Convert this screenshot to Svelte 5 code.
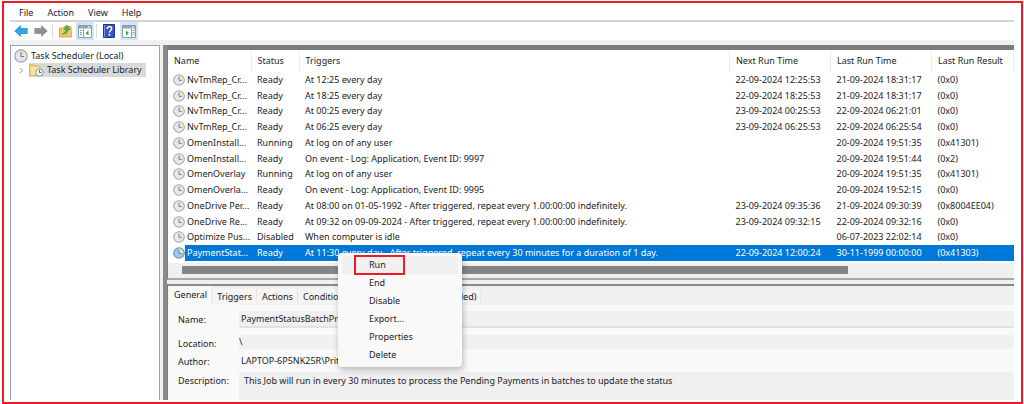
<script lang="ts">
	const menus = ['File', 'Action', 'View', 'Help'];

	const tasks = [
		{ name: 'NvTmRep_Cr...', status: 'Ready', trigger: 'At 12:25 every day', next: '22-09-2024 12:25:53', last: '21-09-2024 18:31:17', result: '(0x0)' },
		{ name: 'NvTmRep_Cr...', status: 'Ready', trigger: 'At 18:25 every day', next: '22-09-2024 18:25:53', last: '21-09-2024 18:31:17', result: '(0x0)' },
		{ name: 'NvTmRep_Cr...', status: 'Ready', trigger: 'At 00:25 every day', next: '23-09-2024 00:25:53', last: '22-09-2024 06:21:01', result: '(0x0)' },
		{ name: 'NvTmRep_Cr...', status: 'Ready', trigger: 'At 06:25 every day', next: '23-09-2024 06:25:53', last: '22-09-2024 06:25:54', result: '(0x0)' },
		{ name: 'OmenInstall...', status: 'Running', trigger: 'At log on of any user', next: '', last: '20-09-2024 19:51:35', result: '(0x41301)' },
		{ name: 'OmenInstall...', status: 'Ready', trigger: 'On event - Log: Application, Event ID: 9997', next: '', last: '20-09-2024 19:51:44', result: '(0x2)' },
		{ name: 'OmenOverlay', status: 'Running', trigger: 'At log on of any user', next: '', last: '20-09-2024 19:51:35', result: '(0x41301)' },
		{ name: 'OmenOverla...', status: 'Ready', trigger: 'On event - Log: Application, Event ID: 9995', next: '', last: '20-09-2024 19:52:15', result: '(0x0)' },
		{ name: 'OneDrive Per...', status: 'Ready', trigger: 'At 08:00 on 01-05-1992 - After triggered, repeat every 1.00:00:00 indefinitely.', next: '23-09-2024 09:35:36', last: '21-09-2024 09:30:39', result: '(0x8004EE04)' },
		{ name: 'OneDrive Re...', status: 'Ready', trigger: 'At 09:32 on 09-09-2024 - After triggered, repeat every 1.00:00:00 indefinitely.', next: '23-09-2024 09:32:15', last: '22-09-2024 09:32:16', result: '(0x0)' },
		{ name: 'Optimize Pus...', status: 'Disabled', trigger: 'When computer is idle', next: '', last: '06-07-2023 22:02:14', result: '(0x0)' },
		{ name: 'PaymentStat...', status: 'Ready', trigger: 'At 11:30 every day - After triggered, repeat every 30 minutes for a duration of 1 day.', next: '22-09-2024 12:00:24', last: '30-11-1999 00:00:00', result: '(0x41303)' },
	];

	const tabs = ['General', 'Triggers', 'Actions', 'Conditions', 'Settings', 'History (disabled)'];
	const commands = ['Run', 'End', 'Disable', 'Export...', 'Properties', 'Delete'];

	let selected = $state(11);
	let activeTab = $state('General');
</script>

{#snippet clock(size: number)}
	<svg width={size} height={size} viewBox="0 0 14 14" aria-hidden="true">
		<circle cx="7" cy="7" r="6.2" fill="#e4e8ed" stroke="#a3a3a3" stroke-width="1.2" />
		<path d="M7 7V2a5 5 0 0 1 5 5z" fill="#f3e9a8" />
		<path d="M7 3v4.500h3.200" fill="none" stroke="#6c80ae" stroke-width="1.1" />
	</svg>
{/snippet}

{#snippet paneIcon(arrow: string)}
	<svg width="14" height="13" viewBox="0 0 14 13" aria-hidden="true">
		<path d="M.5 .5h13v12H.5z" fill="#fff" stroke="#9299a3" />
		<path d="M1 1h12v2.500H1z" fill="#9ba3ae" />
		<path d="M10 2h2" stroke="#fff" />
		{#if arrow === 'left'}
			<path d="M5.500 4v8" stroke="#9299a3" />
			<path d="M2 5.500h2M2 7.500h2M2 9.500h2" stroke="#7aa0c8" />
			<path d="M10.500 5.500v5L7.500 8z" fill="#2fae3c" />
		{:else}
			<path d="M9.500 4v8" stroke="#9299a3" />
			<path d="M10.500 5.500h2M10.500 7.500h2M10.500 9.500h2" stroke="#7aa0c8" />
			<path d="M4 5.500v5L7 8z" fill="#2fae3c" />
		{/if}
	</svg>
{/snippet}

<div class="frame">
	<div class="console">
		<nav>
			{#each menus as menu}
				<button>{menu}</button>
			{/each}
		</nav>

		<div class="toolbar">
			<button aria-label="Back">
				<svg width="14" height="12" viewBox="0 0 14 12">
					<path d="M.8 6L6.500 .8V3.500h6.700v5H6.500v2.700z" fill="#34a6e4" stroke="#3b9bd6" />
				</svg>
			</button>
			<button aria-label="Forward">
				<svg width="14" height="12" viewBox="0 0 14 12">
					<path d="M13.200 6L7.500 .8V3.500H.8v5h6.700v2.700z" fill="#8f8f8f" stroke="#9a9a9a" />
				</svg>
			</button>
			<i></i>
			<button aria-label="Up one level">
				<svg width="13" height="14" viewBox="0 0 13 14">
					<path d="M.5 4h4l1-1.500h6.500l.5 10.500H.5z" fill="#efc96d" stroke="#d3ab55" />
					<path d="M3 10c3-.5 4-2.500 4-4.500H5L8 1l3 4.500H9C9 8.500 6.500 10.500 3 10z" fill="#43b649" stroke="#2a8f35" stroke-width=".5" />
				</svg>
			</button>
			<button class="on" aria-label="Show or hide console tree">{@render paneIcon('left')}</button>
			<i></i>
			<button aria-label="Help">
				<svg width="12" height="14" viewBox="0 0 12 14">
					<path d="M.5 .5h11v13H.5z" fill="#3656c4" stroke="#24398e" />
					<path d="M1.500 1v12" stroke="#7d95e6" />
					<path d="M4.300 5c0-3.200 4.400-3 4.400-.4C8.700 6.500 6.500 6.500 6.500 8.500" fill="none" stroke="#fff" stroke-width="1.500" />
					<circle cx="6.500" cy="10.800" r="1" fill="#fff" />
				</svg>
			</button>
			<button class="on" aria-label="Show or hide action pane">{@render paneIcon('right')}</button>
		</div>

		<div class="workspace">
			<aside>
				<a class="root" href="#local">{@render clock(14)}<span>Task Scheduler (Local)</span></a>
				<div class="branch">
					<svg width="5" height="7" viewBox="0 0 5 7" aria-hidden="true"><path d="M1 1l2.500 2.500L1 6" fill="none" stroke="#999" /></svg>
					<a href="#library">
						<svg width="15" height="14" viewBox="0 0 15 14" aria-hidden="true">
							<path d="M.5 1.500h4l1 1.500H11v9.500H.5z" fill="#f3cf77" stroke="#dab75e" />
							<path d="M2 4h8v8H2z" fill="#fbe3a2" />
							<circle cx="10.500" cy="9.500" r="3.800" fill="#eef2f6" stroke="#8a97a5" />
							<path d="M10.500 7v2.500h2" fill="none" stroke="#4b6894" />
						</svg>
						<span>Task Scheduler Library</span>
					</a>
				</div>
			</aside>

			<main>
				<section class="list">
					<table>
						<colgroup>
							<col class="c-name" /><col class="c-status" /><col /><col class="c-time" /><col class="c-time" /><col class="c-result" />
						</colgroup>
						<thead>
							<tr>
								<th>Name</th>
								<th>Status</th>
								<th>Triggers</th>
								<th>Next Run Time</th>
								<th>Last Run Time</th>
								<th>Last Run Result</th>
							</tr>
						</thead>
						<tbody>
							{#each tasks as task, i}
								<tr class:selected={selected === i} onclick={() => (selected = i)}>
									<td><div class="task">{@render clock(12)}<span>{task.name}</span></div></td>
									<td>{task.status}</td>
									<td>{task.trigger}</td>
									<td>{task.next}</td>
									<td>{task.last}</td>
									<td>{task.result}</td>
								</tr>
							{/each}
						</tbody>
					</table>
					<div class="scrollbar"><div class="thumb"></div></div>

					<div class="context" role="menu">
						{#each commands as command, i}
							<button role="menuitem" class:hover={i === 0}><span>{command}</span></button>
						{/each}
					</div>
				</section>

				<section class="details">
					<div class="tabs" role="tablist">
						{#each tabs as tab}
							<button role="tab" aria-selected={activeTab === tab} onclick={() => (activeTab = tab)}>{tab}</button>
						{/each}
					</div>
					<form>
						<label for="name">Name:</label>
						<input id="name" class="name" readonly value="PaymentStatusBatchProcess" />
						<label for="location">Location:</label>
						<input id="location" class="location" readonly value={'\\'} />
						<label for="author" class="middle">Author:</label>
						<input id="author" class="author middle" readonly value="LAPTOP-6P5NK25R\Pritam" />
						<label for="description">Description:</label>
						<textarea id="description" readonly value="This Job will run in every 30 minutes to process the Pending Payments in batches to update the status"></textarea>
					</form>
				</section>
			</main>
		</div>
	</div>
</div>

<style>
	:global(body) {
		background: #fff;
	}

	.frame {
		box-sizing: border-box;
		height: 100vh;
		min-height: 404px;
		border: 2px solid #fff;
		border-width: 1px 1px 0 2px;
		font: 9px/14px "Noto Sans", "Open Sans", sans-serif;
		color: #222;
	}

	.console {
		box-sizing: border-box;
		height: 100%;
		display: flex;
		flex-direction: column;
		padding: 0 7px 2px 6px;
		border: 2px solid #ed1c24;
		background: #fff;
	}

	button {
		padding: 0;
		border: 0;
		background: none;
		font: inherit;
		color: inherit;
	}

	a {
		color: inherit;
		text-decoration: none;
	}

	svg {
		flex: none;
	}

	nav {
		display: flex;
		gap: 14px;
		padding: 2px 9px 0;
		height: 15px;
		border-bottom: 2px solid #d4d4d4;
	}

	.toolbar {
		display: flex;
		align-items: center;
		gap: 2px;
		height: 18px;
		padding-left: 2px;
		border-bottom: 5px solid #f0f0f0;
	}

	.toolbar button {
		width: 18px;
		height: 18px;
		display: flex;
		align-items: center;
		justify-content: center;
	}

	.toolbar .on {
		background: #cce8ff;
	}

	.toolbar i {
		width: 1px;
		height: 14px;
		margin-right: 1px;
		background: #ddd;
	}

	.workspace {
		flex: 1;
		display: flex;
		min-height: 0;
		background: #f0f0f0;
	}

	aside {
		box-sizing: border-box;
		width: 150px;
		flex: none;
		padding-top: 2px;
		border: 1px solid #a0a3ae;
		border-bottom: 0;
		background: #fff;
	}

	.root,
	.branch,
	.branch a {
		display: flex;
		align-items: center;
	}

	.root {
		gap: 3px;
		padding-left: 3px;
		height: 15px;
	}

	.branch {
		gap: 5px;
		padding-left: 8px;
	}

	.branch a {
		gap: 3px;
		padding-right: 4px;
		background: #d9d9d9;
	}

	main {
		flex: 1;
		display: flex;
		flex-direction: column;
		gap: 4px;
		min-width: 0;
		margin-left: 3px;
		border-left: 4px solid #8a8a8a;
	}

	.list {
		position: relative;
		border: 1px solid #7c7c7c;
		border-width: 5px 0 2px 1px;
		border-bottom-color: #a8a8a8;
		background: #fff;
	}

	table {
		width: 100%;
		height: 211px;
		table-layout: fixed;
		border-collapse: collapse;
	}

	.c-name {
		width: 83px;
	}

	.c-status {
		width: 48px;
	}

	.c-time {
		width: 101px;
	}

	.c-result {
		width: 82px;
	}

	th,
	td {
		padding: 0 0 0 6px;
		text-align: left;
		font-weight: normal;
		white-space: nowrap;
	}

	td:first-child {
		padding-left: 5px;
	}

	th {
		height: 22px;
		border-right: 1px solid #ececec;
	}

	.task {
		display: flex;
		align-items: center;
		gap: 2px;
	}

	.selected td {
		background: #0078d7;
		color: #fff;
	}

	.selected td:first-child {
		background: linear-gradient(to right, #fff 17px, #0078d7 17px);
	}

	.selected circle {
		fill: #9cc8ec;
		stroke: #5c8fb8;
	}

	.scrollbar {
		box-sizing: border-box;
		height: 15px;
		margin-top: 2px;
		padding: 3px 0 3px 14px;
		background: #f0f0f0;
	}

	.thumb {
		width: 80%;
		height: 8px;
		background: #858585;
	}

	.context {
		position: absolute;
		top: 203px;
		left: 170px;
		box-sizing: border-box;
		width: 124px;
		display: flex;
		flex-direction: column;
		padding: 3px 4px;
		border-radius: 4px;
		background: #f9f9f9;
		box-shadow: 1px 3px 6px #0004;
	}

	.context button {
		height: 18px;
		display: flex;
		align-items: center;
		padding-left: 12px;
		border-radius: 2px;
		text-align: left;
	}

	.context span {
		box-sizing: border-box;
		padding: 1px 13px;
		border: 2px solid transparent;
		line-height: 14px;
	}

	.context .hover {
		background: #f0f0f0;
	}

	.context .hover span {
		width: 51px;
		border-color: #ed1c24;
	}

	.details {
		flex: 1;
		display: flex;
		flex-direction: column;
		min-height: 0;
		border-top: 2px solid #8a8a8a;
		border-left: 1px solid #7c7c7c;
		background: #f9f9f9;
	}

	.tabs {
		display: flex;
		align-items: flex-end;
		height: 19px;
		padding-left: 1px;
		background: #f0f0f0;
	}

	.tabs button {
		height: 16px;
		padding: 0 5px;
		background: #f4f4f4;
		box-shadow: inset -1px 0 #e8e8e8;
	}

	.tabs button[aria-selected='true'] {
		height: 19px;
		padding-bottom: 2px;
		background: #f9f9f9;
	}

	form {
		flex: 1;
		min-height: 0;
		display: grid;
		grid-template-columns: 61px 1fr;
		grid-template-rows: 24px 15px 22px 1fr;
		align-items: start;
		padding: 6px 0 0 10px;
	}

	label {
		line-height: 17px;
	}

	input,
	textarea {
		box-sizing: border-box;
		min-width: 0;
		padding: 0 2px;
		border: 0;
		outline: 0;
		background: #f0f0f0;
		font: inherit;
		color: inherit;
	}

	.name {
		height: 17px;
		border-bottom: 2px solid #e2e2e2;
	}

	.location {
		height: 14px;
		padding: 0;
	}

	.middle {
		align-self: center;
	}

	.author {
		background: none;
	}

	textarea {
		height: 100%;
		min-height: 0;
		padding: 2px 5px;
		resize: none;
		overflow: hidden;
	}
</style>
